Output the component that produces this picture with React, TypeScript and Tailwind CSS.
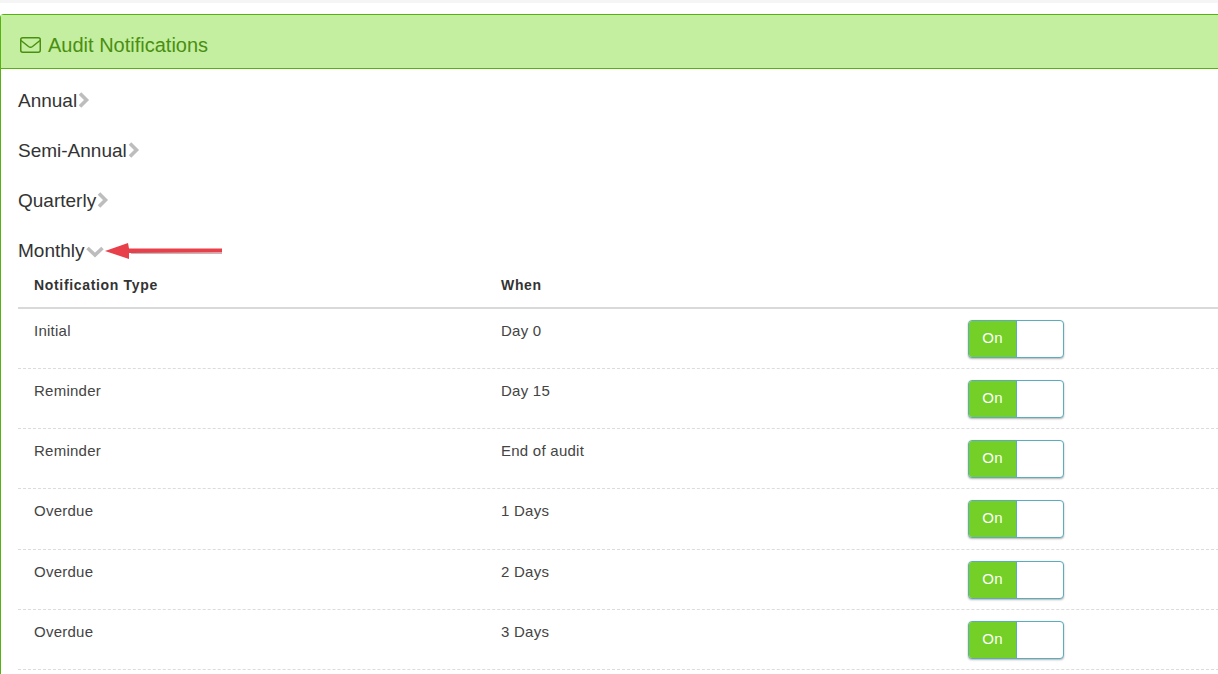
const ROWS = [
  { type: "Initial", when: "Day 0", h: "h-[60px]" },
  { type: "Reminder", when: "Day 15", h: "h-[60px]" },
  { type: "Reminder", when: "End of audit", h: "h-[60px]" },
  { type: "Overdue", when: "1 Days", h: "h-[61px]" },
  { type: "Overdue", when: "2 Days", h: "h-[60px]" },
  { type: "Overdue", when: "3 Days", h: "h-[60px]" },
];

function Toggle() {
  return (
    <div className="flex h-[38px] w-[96px] overflow-hidden rounded-[4px] border border-[#5bacbd] bg-white shadow-[0_1px_2px_rgba(0,0,0,0.3)]">
      <div className="flex w-[48px] items-center justify-center border-r border-[#5bacbd] bg-[#74cf27] pb-[3px] text-[15px] text-white">
        On
      </div>
      <div className="flex-1" />
    </div>
  );
}

function ChevronRight() {
  return (
    <svg width="13" height="16" viewBox="0 0 13 16" className="mt-[-2px]">
      <polyline points="3,1.5 9.5,8 3,14.5" fill="none" stroke="#bdbdbd" strokeWidth="3.6" />
    </svg>
  );
}

function Section({ label }: { label: string }) {
  return (
    <div className="flex h-[50px] items-center text-[19px] text-[#333]">
      <span>{label}</span>
      <ChevronRight />
    </div>
  );
}

export default function App() {
  return (
    <div className="h-[674px] w-[1218px] overflow-hidden bg-white font-['Liberation_Sans',Arial,sans-serif]">
      <div className="h-[3px] bg-[#f5f5f5]" />

      {/* PANEL */}
      <div className="mt-[11px] h-[700px] w-[1240px] rounded-tl-[4px] border border-b-0 border-[#55b210]">
        <div className="flex h-[54px] items-center gap-[7px] border-b border-[#55b210] bg-[#c4eea0] pl-[19px] pt-[6px] text-[20px] text-[#4a8f10]">
          <svg width="21" height="16" viewBox="0 0 21 16" fill="none" stroke="#4a8f10" strokeWidth="1.5">
            <rect x="0.75" y="0.75" width="19.5" height="14.5" rx="2" />
            <path d="M1 3.5 L8.5 9.5 Q10.5 11 12.5 9.5 L20 3.5" />
          </svg>
          <span>Audit Notifications</span>
        </div>

        <div className="pl-[17px] pt-[7px]">
          <Section label="Annual" />
          <Section label="Semi-Annual" />
          <Section label="Quarterly" />

          <div className="relative flex h-[50px] items-center text-[19px] text-[#333]">
            <span>Monthly</span>
            <svg width="18" height="12" viewBox="0 0 18 12" className="ml-[1px] mt-[2px]">
              <polyline points="1.5,2 9,9 16.5,2" fill="none" stroke="#bdbdbd" strokeWidth="3.6" />
            </svg>
            {/* annotation arrow */}
            <svg className="absolute left-[87px] top-[16px]" width="118" height="18" viewBox="0 0 118 18">
              <path d="M117 6.5 L24 6.5 L23 1 L0 9 L24 17 L24 11 L117 10.5 Z" fill="#e8404a" />
              <path d="M26 11.5 L117 11.5" stroke="#bbb" strokeWidth="1" />
            </svg>
          </div>

          {/* TABLE */}
          <div className="grid h-[33px] grid-cols-[467px_467px_1fr] border-b-2 border-[#d9d9d9] pl-[16px] text-[14px] font-bold leading-[19px] tracking-[0.67px] text-[#333]">
            <div>Notification Type</div>
            <div>When</div>
            <div />
          </div>
          {ROWS.map((row, index) => (
            <div
              key={index}
              className={`grid ${row.h} grid-cols-[467px_467px_1fr] border-b border-dashed border-[#dcdcdc] pl-[16px] pt-[11px] text-[15px] leading-[22px] tracking-[0.25px] text-[#444]`}
            >
              <div>{row.type}</div>
              <div>{row.when}</div>
              <Toggle />
            </div>
          ))}
        </div>
      </div>
    </div>
  );
}
